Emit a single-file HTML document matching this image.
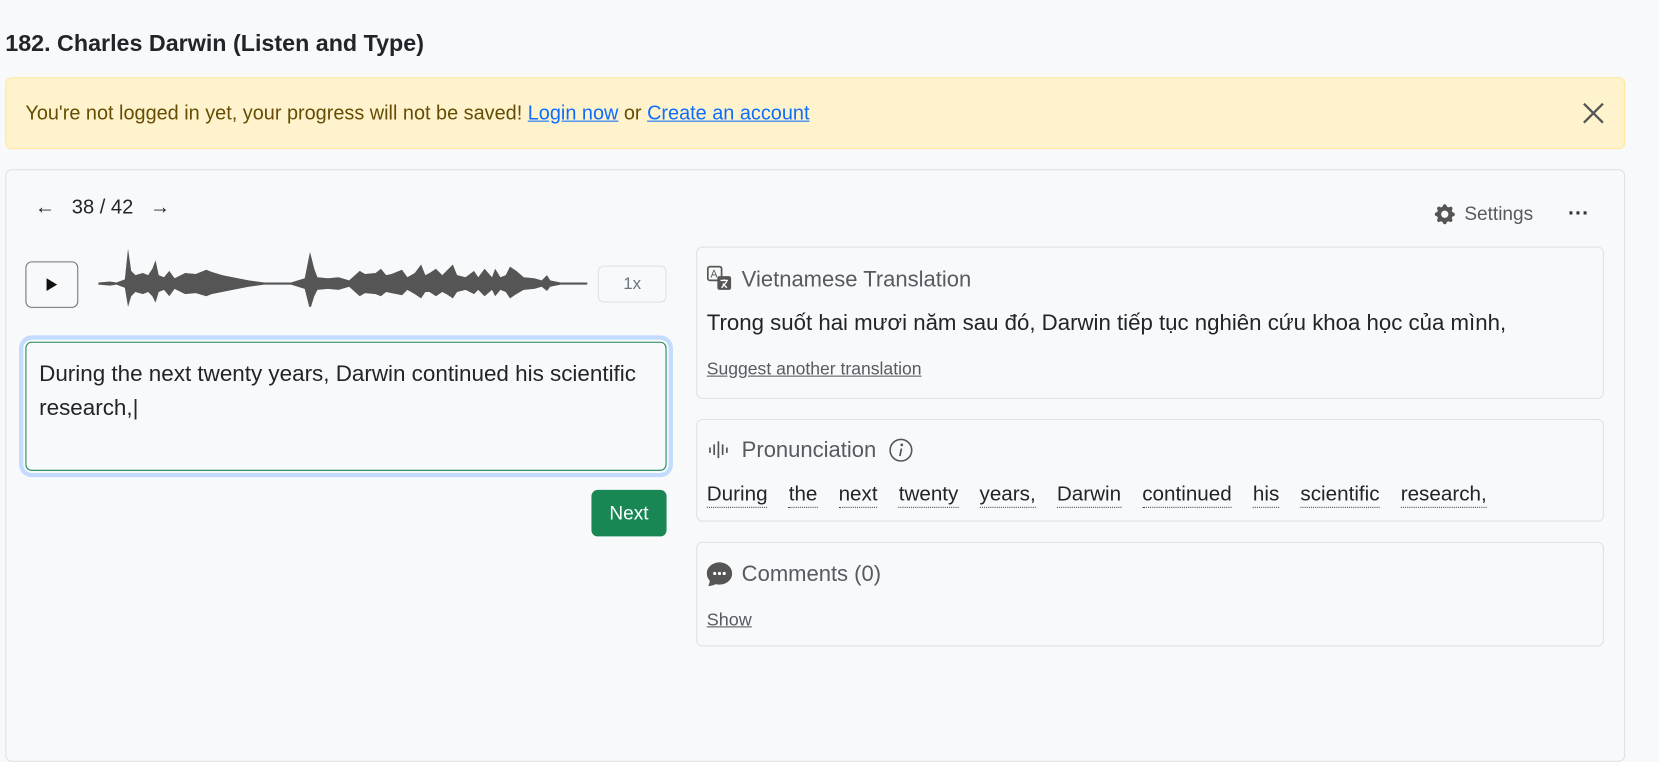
<!DOCTYPE html>
<html><head><meta charset="utf-8"><style>
*{box-sizing:border-box;margin:0;padding:0}
html,body{width:1659px;height:709px;overflow:hidden;background:#f8f9fa}
#w{position:absolute;left:0;top:0;width:1568px;height:670px;transform:scale(1.05804);transform-origin:0 0;font-family:"Segoe UI","Liberation Sans",sans-serif;color:#212529}
.abs{position:absolute}
h1{position:absolute;left:5px;top:28px;font-size:22px;font-weight:700;color:#212529}
.alert{left:5px;top:73px;width:1531px;height:68px;background:#fff3cd;border:1px solid #ffe69c;border-radius:6px;color:#664d03;font-size:18.8px;padding:22px 18px}
.alert a{color:#0d6efd;text-decoration:underline}
.card{left:5px;top:160px;width:1531px;height:560px;border:1px solid #dee2e6;border-radius:6px;background:#f8f9fa}
.sub{border:1px solid #dee2e6;border-radius:6px;background:#f8f9fa;left:658px;width:858px}
.hd{font-size:20.8px;color:#555b61}
.dot{border-bottom:1px dotted #444;margin-right:20px;padding-bottom:1px}
</style></head><body><div id="w">
<h1>182. Charles Darwin (Listen and Type)</h1>
<div class="abs alert">You're not logged in yet, your progress will not be saved! <a>Login now</a> or <a>Create an account</a></div>
<svg class="abs" style="left:1495px;top:96px" width="22" height="22" viewBox="0 0 22 22"><path d="M2 2L20 20M20 2L2 20" stroke="#555" stroke-width="2.2"/></svg>
<div class="abs card"></div>
<div class="abs" style="left:33px;top:186px;font-size:19px;color:#212529">←&nbsp;&nbsp;&nbsp;38 / 42&nbsp;&nbsp;&nbsp;→</div>
<svg class="abs" style="left:1356px;top:193px" width="19" height="19" viewBox="0 0 16 16"><path fill="#555" d="M9.4 1.1c-.4-1.5-2.4-1.5-2.8 0l-.1.3a1.5 1.5 0 0 1-2.1.9l-.3-.2c-1.3-.7-2.8.7-2 2l.1.3a1.5 1.5 0 0 1-.8 2.1l-.3.1c-1.5.4-1.5 2.4 0 2.8l.3.1a1.5 1.5 0 0 1 .9 2.1l-.2.3c-.7 1.300.7 2.8 2 2l.3-.1a1.5 1.5 0 0 1 2.1.9l.1.3c.4 1.5 2.4 1.5 2.8 0l.1-.3a1.5 1.5 0 0 1 2.1-.9l.3.2c1.3.7 2.8-.7 2-2l-.1-.3a1.5 1.5 0 0 1 .9-2.1l.3-.1c1.5-.4 1.5-2.4 0-2.8l-.3-.1a1.5 1.5 0 0 1-.9-2.1l.2-.3c.7-1.3-.7-2.8-2-2l-.3.1a1.5 1.5 0 0 1-2.1-.9zM8 10.9a2.9 2.9 0 1 1 0-5.8 2.9 2.9 0 0 1 0 5.8"/></svg>
<div class="abs" style="left:1384px;top:192px;font-size:18px;color:#555b61">Settings</div>
<div class="abs" style="left:1482px;top:192px;font-size:20px;color:#333;font-weight:700;line-height:20px">···</div>
<div class="abs" style="left:24px;top:247px;width:50px;height:44px;border:1px solid #6c757d;border-radius:6px;background:#f8f9fa"></div>
<svg class="abs" style="left:43px;top:263px" width="12" height="12"><path d="M1 0L11 6L1 12Z" fill="#111"/></svg>
<svg class="abs" style="left:90px;top:230px" width="470" height="60" viewBox="90 230 470 60">
<path d="M93 268H555" stroke="#999" stroke-width="1.5"/>
<polygon fill="#555" points="93,267 104,266 110,267 118,264 121,235 124,256 128,260 135,258 140,260 144,254 147,246 150,260 155,262 160,256 165,263 175,258 185,259 195,255 200,257 210,260 220,262 235,265 250,267 275,267 288,263 293,238 297,254 300,262 310,263 320,262 330,265 340,256 345,259 355,258 360,254 365,260 370,259 380,255 385,262 392,258 398,250 402,260 406,258 412,254 418,260 422,256 428,250 432,260 440,262 448,256 452,262 458,254 465,262 468,254 473,262 478,260 482,252 488,256 495,262 505,263 512,265 517,260 520,265 530,267 555,267 555,269 530,269 520,271 517,275 512,271 505,273 495,274 488,278 482,282 478,276 473,274 468,280 465,274 458,280 452,274 448,278 440,274 432,276 428,282 422,278 418,276 412,280 406,276 402,276 398,282 392,278 385,274 380,279 370,277 365,276 360,280 355,278 345,277 340,280 330,271 320,274 310,273 300,274 297,280 293,293 288,273 275,269 250,269 235,271 220,274 210,276 200,278 195,280 185,277 175,278 165,273 160,280 155,274 150,276 147,286 144,280 140,276 135,278 128,276 124,280 121,290 118,272 110,269 104,270 93,269"/>
</svg>
<div class="abs" style="left:565px;top:251px;width:65px;height:35px;border:1px solid #dee2e6;border-radius:6px;color:#6c757d;font-size:16px;text-align:center;line-height:34px">1x</div>
<div class="abs" style="left:22px;top:321px;width:610px;height:126px;border-radius:8px;box-shadow:0 0 0 4px #c2dbfe"></div>
<div class="abs" style="left:24px;top:323px;width:606px;height:122px;border:1px solid #198754;border-radius:6px;background:#f8f9fa;padding:14px 12px;font-size:21.2px;line-height:32px">During the next twenty years, Darwin continued his scientific research,|</div>
<div class="abs" style="left:559px;top:463px;width:71px;height:44px;background:#198754;border-radius:6px;color:#fff;font-size:18px;text-align:center;line-height:44px">Next</div>

<div class="abs sub" style="top:233px;height:144px"></div>
<svg class="abs" style="left:668px;top:251px" width="24" height="24" viewBox="0 0 24 24"><rect x="1" y="1" width="13" height="13" rx="2" fill="none" stroke="#555" stroke-width="1.6"/><text x="3.5" y="11.5" font-size="10" fill="#555" font-family="Liberation Sans">A</text><rect x="10" y="10" width="13" height="13" rx="2" fill="#555"/><path d="M13 14h7M16.5 13v1.5M14 21l5-6M15 17l4 4" stroke="#fff" stroke-width="1.3" fill="none"/></svg>
<div class="abs hd" style="left:701px;top:253px">Vietnamese Translation</div>
<div class="abs" style="left:668px;top:294px;font-size:21px">Trong suốt hai mươi năm sau đó, Darwin tiếp tục nghiên cứu khoa học của mình,</div>
<div class="abs" style="left:668px;top:339px;font-size:16.6px;color:#555b61;text-decoration:underline">Suggest another translation</div>

<div class="abs sub" style="top:396px;height:97px"></div>
<svg class="abs" style="left:669px;top:415px" width="22" height="20"><path d="M2 8v5M6 5v10M10 2v16M14 5v10M18 8v5" stroke="#555" stroke-width="1.6"/></svg>
<div class="abs hd" style="left:701px;top:414px">Pronunciation</div>
<svg class="abs" style="left:840px;top:414px" width="23" height="23"><circle cx="11.5" cy="11.5" r="10.2" fill="none" stroke="#555" stroke-width="1.5"/><circle cx="12.3" cy="6.5" r="1.3" fill="#555"/><path d="M12 10L10.5 17" stroke="#555" stroke-width="1.6"/></svg>
<div class="abs" style="left:668px;top:456px;font-size:19.5px"><span class="dot">During</span><span class="dot">the</span><span class="dot">next</span><span class="dot">twenty</span><span class="dot">years,</span><span class="dot">Darwin</span><span class="dot">continued</span><span class="dot">his</span><span class="dot">scientific</span><span class="dot">research,</span></div>

<div class="abs sub" style="top:512px;height:99px"></div>
<svg class="abs" style="left:668px;top:530px" width="24" height="24" viewBox="0 0 16 16"><path fill="#555" d="M16 8c0 3.9-3.6 7-8 7a9 9 0 0 1-2.3-.3c-.6.3-2 .9-4.3 1.3-.2 0-.4-.2-.3-.4.4-.9.7-2 .8-3C.7 11.3 0 9.7 0 8c0-3.9 3.6-7 8-7s8 3.1 8 7"/><circle cx="5" cy="8" r="1" fill="#fff"/><circle cx="8" cy="8" r="1" fill="#fff"/><circle cx="11" cy="8" r="1" fill="#fff"/></svg>
<div class="abs hd" style="left:701px;top:531px">Comments (0)</div>
<div class="abs" style="left:668px;top:576px;font-size:17px;color:#555b61;text-decoration:underline">Show</div>
</div></body></html>
